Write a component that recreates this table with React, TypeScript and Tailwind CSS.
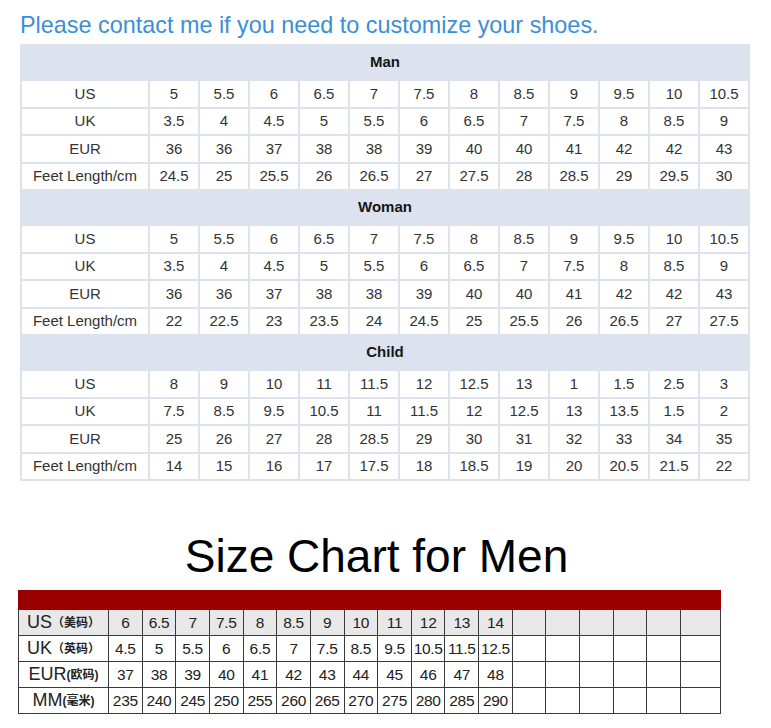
import React from "react";

type Section = {
    title: string;
    rows: { label: string; values: string[] }[];
};

const sections: Section[] = [
    {
        title: "Man",
        rows: [
            { label: "US", values: ["5", "5.5", "6", "6.5", "7", "7.5", "8", "8.5", "9", "9.5", "10", "10.5"] },
            { label: "UK", values: ["3.5", "4", "4.5", "5", "5.5", "6", "6.5", "7", "7.5", "8", "8.5", "9"] },
            { label: "EUR", values: ["36", "36", "37", "38", "38", "39", "40", "40", "41", "42", "42", "43"] },
            { label: "Feet Length/cm", values: ["24.5", "25", "25.5", "26", "26.5", "27", "27.5", "28", "28.5", "29", "29.5", "30"] },
        ],
    },
    {
        title: "Woman",
        rows: [
            { label: "US", values: ["5", "5.5", "6", "6.5", "7", "7.5", "8", "8.5", "9", "9.5", "10", "10.5"] },
            { label: "UK", values: ["3.5", "4", "4.5", "5", "5.5", "6", "6.5", "7", "7.5", "8", "8.5", "9"] },
            { label: "EUR", values: ["36", "36", "37", "38", "38", "39", "40", "40", "41", "42", "42", "43"] },
            { label: "Feet Length/cm", values: ["22", "22.5", "23", "23.5", "24", "24.5", "25", "25.5", "26", "26.5", "27", "27.5"] },
        ],
    },
    {
        title: "Child",
        rows: [
            { label: "US", values: ["8", "9", "10", "11", "11.5", "12", "12.5", "13", "1", "1.5", "2.5", "3"] },
            { label: "UK", values: ["7.5", "8.5", "9.5", "10.5", "11", "11.5", "12", "12.5", "13", "13.5", "1.5", "2"] },
            { label: "EUR", values: ["25", "26", "27", "28", "28.5", "29", "30", "31", "32", "33", "34", "35"] },
            { label: "Feet Length/cm", values: ["14", "15", "16", "17", "17.5", "18", "18.5", "19", "20", "20.5", "21.5", "22"] },
        ],
    },
];

const menRows = [
    { label: "US", cn: "（美码）", values: ["6", "6.5", "7", "7.5", "8", "8.5", "9", "10", "11", "12", "13", "14"] },
    { label: "UK", cn: "（英码）", values: ["4.5", "5", "5.5", "6", "6.5", "7", "7.5", "8.5", "9.5", "10.5", "11.5", "12.5"] },
    { label: "EUR", cn: "(欧码)", values: ["37", "38", "39", "40", "41", "42", "43", "44", "45", "46", "47", "48"] },
    { label: "MM", cn: "(毫米)", values: ["235", "240", "245", "250", "255", "260", "265", "270", "275", "280", "285", "290"] },
];

export default function App() {
    return (
        <div className="w-[771px] h-[728px] bg-white font-['Liberation_Sans',Arial,'Noto_Sans_CJK_SC',sans-serif] overflow-hidden">
            <div className="pt-[13px] pl-[20px]">
                <h1 className="text-[23.4px] leading-[24px] text-[#3b8fd4]">
                    Please contact me if you need to customize your shoes.
                </h1>
            </div>

            {/* blue/grey chart */}
            <div className="ml-[20px] mt-[7px] w-[730px] bg-[#dce3ee] p-[2px] grid grid-cols-[126px_repeat(12,48px)] gap-[2px]">
                {sections.map((section) => (
                    <React.Fragment key={section.title}>
                        <div className="col-span-13 h-[33px] flex items-center justify-center text-[15px] font-bold text-[#161616]">
                            {section.title}
                        </div>
                        {section.rows.map((row) => (
                            <React.Fragment key={section.title + row.label}>
                                <div className="h-[25.5px] bg-white flex items-center justify-center text-[15px] text-[#333]">
                                    {row.label}
                                </div>
                                {row.values.map((v, i) => (
                                    <div key={i} className="h-[25.5px] bg-white flex items-center justify-center text-[15px] text-[#333]">
                                        {v}
                                    </div>
                                ))}
                            </React.Fragment>
                        ))}
                    </React.Fragment>
                ))}
            </div>

            <div className="mt-[52px] w-[703px] ml-[18px] pl-[14px] flex justify-center">
                <h2 className="text-[46px] leading-[47px] text-black">Size Chart for Men</h2>
            </div>

            {/* red chart */}
            <div className="ml-[18px] mt-[10px] w-[703px]">
                <div className="h-[20px] bg-[#9a0000]" />
                <div className="bg-[#3a3a3a] p-px pt-0 grid grid-cols-[89px_repeat(17,minmax(0,1fr))_39px] gap-px">
                    {menRows.map((row, r) => (
                        <React.Fragment key={row.label}>
                            <div className={`h-[25px] flex items-center justify-center text-[#222] ${r === 0 ? "bg-[#e8e8e8]" : "bg-white"}`}>
                                <span className="text-[18px]">{row.label}</span>
                                <span className="text-[12px] font-bold">{row.cn}</span>
                            </div>
                            {row.values.map((v, i) => (
                                <div key={i} className={`h-[25px] flex items-center justify-center text-[15.5px] text-[#222] tracking-[-0.3px] ${r === 0 ? "bg-[#e8e8e8]" : "bg-white"}`}>
                                    {v}
                                </div>
                            ))}
                            {[0, 1, 2, 3, 4, 5].map((i) => (
                                <div key={"e" + i} className={`h-[25px] ${r === 0 ? "bg-[#e8e8e8]" : "bg-white"}`} />
                            ))}
                        </React.Fragment>
                    ))}
                </div>
            </div>
        </div>
    );
}
